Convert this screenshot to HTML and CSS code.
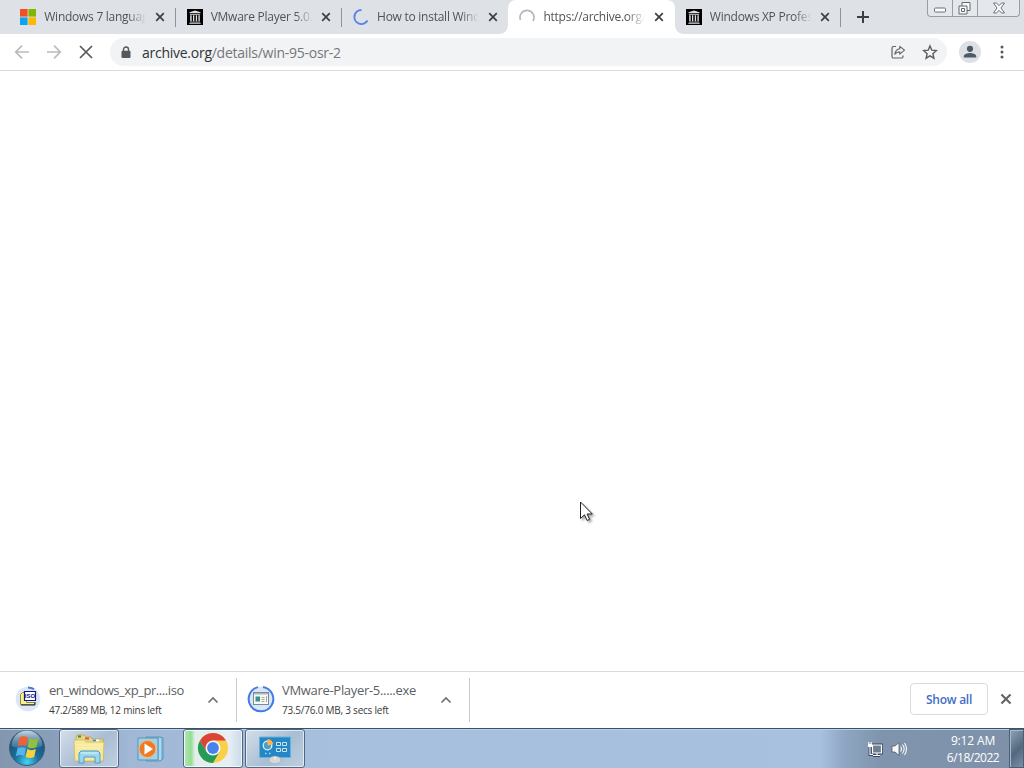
FILE: index.html
```
<!DOCTYPE html>
<html lang="en">
<head>
    <meta charset="UTF-8">
    <meta name="viewport" content="width=device-width, initial-scale=1.0">
    <title>archive.org/details/win-95-osr-2</title>
    <link rel="stylesheet" href="styles.css">
</head>
<body>
    <!-- shared shapes -->
    <svg class="defs" width="0" height="0">
        <symbol id="close" viewBox="0 0 10 10"><path d="M1.200 1.200l7.600 7.600M8.800 1.200L1.200 8.800" fill="none" stroke="currentColor" stroke-width="1.700"/></symbol>
        <symbol id="archive" viewBox="0 0 16 16">
            <path fill="#000" d="M0 0h16v16H0z"/>
            <path fill="#ddd" d="M8 1.500l5.500 1.700v.9h-11v-.9zM2.800 4.800h10.400v1H2.800zM3.200 6.300h1.500v6H3.200zM6 6.300h1.300v6H6zM8.800 6.300h1.300v6H8.800zM11.400 6.300h1.400v6h-1.400zM2.800 12.700h10.400v.8H2.800zM2.300 14h11.400v.8H2.300z"/>
        </symbol>
        <symbol id="chevron" viewBox="0 0 12 8"><path d="M1.500 6.500L6 2l4.500 4.500" fill="none" stroke="#6b6e72" stroke-width="1.600"/></symbol>
    </svg>

    <div class="tab-strip">
        <div class="tab">
            <svg class="favicon" viewBox="0 0 16 16"><path fill="#f05022" d="M0 0h7.600v7.600H0z"/><path fill="#7db900" d="M8.400 0H16v7.600H8.400z"/><path fill="#0ba4ef" d="M0 8.400h7.600V16H0z"/><path fill="#fdb801" d="M8.400 8.400H16V16H8.400z"/></svg>
            <span class="tab-title">Windows 7 languag</span>
            <svg class="tab-close"><use href="#close"/></svg>
        </div>
        <div class="tab">
            <svg class="favicon"><use href="#archive"/></svg>
            <span class="tab-title">VMware Player 5.0.</span>
            <svg class="tab-close"><use href="#close"/></svg>
        </div>
        <div class="tab no-line">
            <svg class="favicon" viewBox="0 0 16 16"><path d="M8.500 1A7 7 0 1 0 14.500 11.500" fill="none" stroke="#5b83e6" stroke-width="2"/></svg>
            <span class="tab-title">How to install Wind</span>
            <svg class="tab-close"><use href="#close"/></svg>
        </div>
        <div class="tab active no-line">
            <svg class="favicon" viewBox="0 0 16 16"><path d="M1.500 11A7 7 0 1 1 14 12" fill="none" stroke="#b2b6c3" stroke-width="1.600"/></svg>
            <span class="tab-title">https://archive.org/</span>
            <svg class="tab-close"><use href="#close"/></svg>
        </div>
        <div class="tab">
            <svg class="favicon"><use href="#archive"/></svg>
            <span class="tab-title">Windows XP Profes</span>
            <svg class="tab-close"><use href="#close"/></svg>
        </div>
        <svg class="new-tab" viewBox="0 0 12 12"><path d="M6 0v12M0 6h12" stroke="#3c4043" stroke-width="2"/></svg>
        <div class="window-buttons">
            <span class="min"><svg width="14" height="8" viewBox="0 0 14 8"><rect x="1.500" y="2" width="11" height="4" rx="1" fill="#fff" stroke="#6d7176"/></svg></span>
            <span class="max"><svg width="15" height="15" viewBox="0 0 15 15"><path d="M5 1.500h8v8h-3v3.500H2V5h3z" fill="#f8f9fa" stroke="#65696e"/><path d="M5 5h5v4.500M4.500 7.500h3v3h-3z" fill="none" stroke="#65696e"/></svg></span>
            <span class="exit"><svg width="14" height="12" viewBox="0 0 14 12"><path d="M1.500 1h3L7 3.700 9.500 1h3L9 6l3.500 5h-3L7 8.300 4.500 11h-3L5 6z" fill="#f8f9fa" stroke="#707479"/></svg></span>
        </div>
    </div>

    <div class="toolbar">
        <svg class="nav-icon" viewBox="0 0 16 16"><path d="M15 8H2M8 1.700L1.700 8 8 14.300" fill="none" stroke="#b9bbbe" stroke-width="1.700"/></svg>
        <svg class="nav-icon" viewBox="0 0 16 16"><path d="M1 8h13M8 1.700L14.300 8 8 14.300" fill="none" stroke="#b9bbbe" stroke-width="1.700"/></svg>
        <svg class="nav-icon" viewBox="0 0 16 16"><path d="M2 2l12 12M14 2L2 14" fill="none" stroke="#55585c" stroke-width="1.700"/></svg>
        <div class="address">
            <svg class="lock" viewBox="0 0 10 13"><path d="M2.500 6V3.500a2.500 2.500 0 0 1 5 0V6" fill="none" stroke="#55585c" stroke-width="1.400"/><rect x=".5" y="4.800" width="9" height="7.200" rx="1" fill="#55585c"/></svg>
            <span class="address-text"><b>archive.org</b>/details/win-95-osr-2</span>
            <svg class="share" viewBox="0 0 16 16"><path d="M6 2.500H3.500a1.500 1.500 0 0 0-1.500 1.500v8.500A1.500 1.500 0 0 0 3.500 14h8a1.500 1.500 0 0 0 1.500-1.500V11.500" fill="none" stroke="#606469" stroke-width="1.200"/><path d="M9.800 2.300L14.500 6.200l-4.700 3.900V7.900c-2.300 0-3.700.6-5 2.300.5-3 2-5.100 5-5.500z" fill="none" stroke="#606469" stroke-width="1.100" stroke-linejoin="round"/></svg>
            <svg class="star" viewBox="0 0 16 16"><path d="M8 1.900l1.800 4.300 4.600.4-3.500 3.100 1 4.500L8 11.800l-3.900 2.400 1-4.500-3.500-3.100 4.600-.4z" fill="none" stroke="#5a5e63" stroke-width="1.400"/></svg>
        </div>
        <svg class="avatar" viewBox="0 0 22 22"><circle cx="11" cy="11" r="11" fill="#dde0e5"/><circle cx="11" cy="7.800" r="3.100" fill="#4d5a66"/><path d="M4.800 16.500v-1.300c0-2.200 4-3.200 6.200-3.200s6.200 1 6.200 3.200v1.300z" fill="#4d5a66"/></svg>
        <svg class="menu" viewBox="0 0 4 14"><g fill="#55585c"><circle cx="2" cy="2" r="1.500"/><circle cx="2" cy="7" r="1.500"/><circle cx="2" cy="12" r="1.500"/></g></svg>
    </div>

    <div class="page">
        <svg class="cursor" width="18" height="24" viewBox="0 0 18 24"><path d="M1.500 1v16.500l4-3.700 2.600 5.700 2.500-1.200-2.500-5.300h5.200z" fill="#fff" stroke="#222" stroke-width="1"/></svg>
    </div>

    <div class="downloads">
        <div class="download">
            <svg class="file-icon" viewBox="0 0 28 28">
                <circle cx="14" cy="14" r="12.300" fill="#dde6f7"/>
                <path d="M14 2.500a12 12 0 0 1 6 1.700" fill="none" stroke="#4b7bd4" stroke-width="2"/>
                <path d="M6.500 9.500l2-2h4v10h8v2h-14z" fill="#f5f28c" stroke="#8f8d4a" stroke-width="1"/>
                <path d="M7 20h14v-3" fill="none" stroke="#222"/>
                <path d="M10.500 6.500h11v9h-11z" fill="#fff" stroke="#15158c" stroke-width="1.200"/>
                <text x="16" y="13.300" class="iso" text-anchor="middle">ISO</text>
            </svg>
            <div class="info">
                <div class="name name-iso">en_windows_xp_pr....iso</div>
                <div class="status">47.2/589 MB, 12 mins left</div>
            </div>
            <svg class="chevron"><use href="#chevron"/></svg>
        </div>
        <div class="download second">
            <svg class="file-icon" viewBox="0 0 28 28">
                <circle cx="14" cy="14" r="12.300" fill="#d9e5fb"/>
                <path d="M16 1.900A12.300 12.300 0 1 1 11 2.100" fill="none" stroke="#437ce0" stroke-width="2"/>
                <rect x="6.500" y="7.500" width="15" height="12" fill="#f8f8f4" stroke="#7d8c8e"/>
                <path d="M7 8h14v1.500H7z" fill="#a9b8bb"/><path d="M8.500 11.500h4.500v5H8.500z" fill="#399289"/>
                <path d="M14.500 12.500h3M14.500 14.500h3M14.500 16.500h3M19.500 11v6" stroke="#aaa99e"/>
            </svg>
            <div class="info">
                <div class="name">VMware-Player-5.....exe</div>
                <div class="status">73.5/76.0 MB, 3 secs left</div>
            </div>
            <svg class="chevron"><use href="#chevron"/></svg>
        </div>
        <button class="show-all">Show all</button>
        <svg class="shelf-close"><use href="#close"/></svg>
    </div>

    <div class="taskbar">
        <svg class="start" viewBox="0 0 38 38">
            <defs>
                <radialGradient id="orb" cx=".5" cy=".9" r=".85"><stop offset="0" stop-color="#43d5f5"/><stop offset=".4" stop-color="#1a6f9f"/><stop offset="1" stop-color="#1b4869"/></radialGradient>
                <linearGradient id="shine" x2="0" y2="1"><stop offset="0" stop-color="#dce8ef" stop-opacity=".9"/><stop offset="1" stop-color="#8fb6cd" stop-opacity=".2"/></linearGradient>
            </defs>
            <circle cx="19" cy="19" r="17.500" fill="url(#orb)" stroke="#3b5c76"/>
            <path d="M3.500 17a15.500 15.500 0 0 1 31 0c-9 4-22 4-31 0z" fill="url(#shine)"/>
            <path d="M11.500 8.500q4-2.500 8.500 0l-1.700 8.700q-4.300-2.300-8.500.3z" fill="#ed6335"/>
            <path d="M21.300 9.500q4 2.300 9-.2l-1.900 8.600q-4.700 2.600-8.800.1z" fill="#8fc23f"/>
            <path d="M9.500 19.300q4-2.300 8.500 0L16.300 27q-4.200-2.300-8.500.2z" fill="#57b4ea"/>
            <path d="M19.300 20q4.300 2.300 8.600 0l-1.700 8q-4.300 2.300-8.600-.2z" fill="#fbd13b"/>
        </svg>
        <div class="task explorer">
            <svg width="34" height="32" viewBox="0 0 34 32">
                <path d="M4 4l1-2h7l2 2h5l1 2h11v22H4z" fill="#e9d67c" stroke="#b9a04b" stroke-width=".7"/>
                <path d="M6 2.500h3v2H6z" fill="#3f8a43"/><path d="M13 4.500h4v2h-4z" fill="#cf5e3e"/><path d="M21 6.500h6v2h-6z" fill="#fff"/><path d="M21 6.500h3v2h-3z" fill="#4e87c8"/>
                <path d="M2 8l1-1h9l2 2h17l1 1-1 18H3z" fill="#f6e99b" stroke="#cfb75f" stroke-width=".7"/>
                <path d="M4 12h26M4 15h26" stroke="#fdf4bd"/>
                <path d="M7 30V20l2-2h17l2 2v10h-5v-6H12v6z" fill="#9bd6ef" stroke="#4c9ec9"/>
                <path d="M9 20h17" stroke="#dcf6ff"/>
            </svg>
        </div>
        <div class="task media">
            <svg width="30" height="30" viewBox="0 0 30 30">
                <path d="M10 3h14l3 1v21l-3 2H10z" fill="#80bddf" stroke="#4f8dae" stroke-width=".8"/><path d="M24 4v22" stroke="#daf4ff"/>
                <path d="M2 4h20v22H2z" fill="#a3d0e7" stroke="#5795b7"/>
                <circle cx="11.500" cy="15" r="8.500" fill="#eb7b26" stroke="#f8ba83"/>
                <path d="M8.500 9.500L17 15l-8.500 5.500z" fill="#fff"/>
            </svg>
        </div>
        <div class="task chrome">
            <svg width="32" height="32" viewBox="0 0 32 32">
                <circle cx="16" cy="16" r="15" fill="#fbd049"/>
                <path d="M9.500 19.750L3 8.500A15 15 0 0 0 16 31l6.500-11.250z" fill="#249b57"/>
                <path d="M16 8.500h13A15 15 0 0 0 3 8.500l6.500 11.250z" fill="#da4538"/>
                <circle cx="16" cy="16" r="7.500" fill="#f8f8f8"/><circle cx="16" cy="16" r="5.900" fill="#4783ec"/>
            </svg>
        </div>
        <div class="task control">
            <svg width="34" height="30" viewBox="0 0 34 30">
                <path d="M1.500 3h31v20.500h-31z" fill="#2587c6" stroke="#62b4dc"/>
                <circle cx="9.500" cy="11.500" r="4.300" fill="#4a9dd0" stroke="#d8f2fb" stroke-width="1.300"/>
                <path d="M10 11V5.500a5.500 5.500 0 0 1 4.800 4.300z" fill="#ffb449" stroke="#ffb449"/>
                <path d="M18.500 8.500h4v3h-4zM24.500 8.500h4v3h-4zM18.500 14.500h4v3h-4zM24.500 14.500h4v3h-4z" fill="#2779ae" stroke="#c4e9f7"/>
                <path d="M7 19.500h1.500M11 19.500h1.500" stroke="#a9d7ec" stroke-width="1.500"/>
                <ellipse cx="17" cy="26" rx="6" ry="3.800" fill="#d5d9d9" stroke="#a1adb3" stroke-width=".7"/><path d="M17 22.500v3" stroke="#fff"/>
            </svg>
        </div>
        <div class="tray">
            <svg width="16" height="16" viewBox="0 0 16 16"><path d="M5.500 4h9v8h-9zM6 14.500h7M10 12v2.500M3 6v7.500h3" fill="none" stroke="#33475a" stroke-width="2.800"/><path d="M5.500 4h9v8h-9z" fill="#6e8090" stroke="#fff" stroke-width="1.200"/><path d="M6 14.500h7M10 12v2.500M3 6v7.500h3M1.800 1v2.500M4.200 1v2.500" fill="none" stroke="#fff" stroke-width="1.100"/><path d="M1 3h4v3H1z" fill="#fff"/></svg>
            <svg width="16" height="16" viewBox="0 0 16 16"><path d="M1 5h3l4-3.500v13L4 11H1z" fill="#f8f8f8" stroke="#4a5b6b" stroke-width=".8"/><path d="M9.500 5.500q2 2.500 0 5M11.500 3.500q3.300 4.500 0 9M13.500 2q4 6 0 12" fill="none" stroke="#f4f7f9" stroke-width="1.100"/></svg>
        </div>
        <div class="clock">
            <div>9:12 AM</div>
            <div class="date">6/18/2022</div>
        </div>
        <div class="show-desktop"></div>
    </div>
</body>
</html>
```
FILE: styles.css
```
* {
    box-sizing: border-box;
}
body {
    margin: 0;
    width: 1024px;
    height: 768px;
    overflow: hidden;
    display: flex;
    flex-direction: column;
    background: #fff;
    font-family: "Open Sans", "Noto Sans", sans-serif;
    font-size: 12px;
    color: #505458;
}
svg {
    display: block;
    flex: none;
}
.defs {
    position: absolute;
}

/* tabs */
.tab-strip {
    height: 34px;
    flex: none;
    display: flex;
    padding-left: 9px;
    background: #dee1e6;
}
.tab {
    position: relative;
    width: 166.4px;
    height: 34px;
    flex: none;
    display: flex;
    align-items: center;
    padding: 0 10px 0 11.3px;
}
.tab::after {
    content: "";
    position: absolute;
    right: -0.2px;
    top: 8px;
    width: 1px;
    height: 19px;
    background: #8f9297;
}
.tab.no-line::after {
    display: none;
}
.tab.active {
    background: #fff;
    border-radius: 8px 8px 0 0;
}
.tab.active::before {
    content: "";
    position: absolute;
    left: -8px;
    right: -8px;
    bottom: 0;
    height: 8px;
    background: radial-gradient(circle at 0 0, transparent 7.5px, #fff 8px) left / 8px 8px no-repeat,
        radial-gradient(circle at 100% 0, transparent 7.5px, #fff 8px) right / 8px 8px no-repeat;
}
.favicon {
    width: 16px;
    height: 16px;
}
.tab-title {
    width: 102px;
    margin: 0 8.5px 0 8px;
    white-space: nowrap;
    line-height: 20px;
    letter-spacing: -0.26px;
    -webkit-mask-image: linear-gradient(to right, #000 84px, transparent 102px);
    mask-image: linear-gradient(to right, #000 84px, transparent 102px);
}
.tab-close {
    width: 10px;
    height: 10px;
    color: #3c4043;
}
.new-tab {
    width: 12px;
    height: 12px;
    margin: 11px 0 0 16px;
}
.window-buttons {
    display: flex;
    height: 17px;
    margin-left: auto;
    margin-right: 4px;
    border: 1px solid #9a9da3;
    border-top: 0;
    border-radius: 0 0 4px 4px;
    background: #e4e7eb;
}
.window-buttons span {
    display: flex;
    align-items: center;
    justify-content: center;
    width: 25px;
}
.window-buttons .min {
    padding-top: 3px;
    width: 24px;
}
.window-buttons .max {
    padding-right: 1px;
}
.window-buttons .exit {
    width: 42px;
}
.window-buttons span + span {
    border-left: 1px solid #9a9da3;
}

/* toolbar */
.toolbar {
    height: 37px;
    flex: none;
    display: flex;
    align-items: center;
    padding: 0 20px 0 14px;
    border-bottom: 1px solid #d9dbde;
}
.nav-icon {
    width: 16px;
    height: 16px;
    margin-right: 16px;
}
.address {
    width: 837px;
    height: 28px;
    display: flex;
    align-items: center;
    border-radius: 14px;
    background: #f1f3f4;
    padding: 0 9px 0 11px;
    font-size: 14px;
    letter-spacing: -0.26px;
    color: #74777b;
}
.lock {
    width: 10px;
    height: 13px;
    margin-right: 11px;
}
.address b {
    font-weight: normal;
    color: #303336;
}
.share {
    width: 16px;
    height: 16px;
    margin-left: auto;
    margin-right: 16px;
}
.star {
    width: 16px;
    height: 16px;
}
.avatar {
    width: 22px;
    height: 22px;
    margin-left: 12px;
}
.menu {
    width: 4px;
    height: 14px;
    margin-left: auto;
}

.page {
    flex: 1;
    position: relative;
}
.cursor {
    position: absolute;
    left: 579px;
    top: 430px;
    filter: drop-shadow(2px 2px 1px rgba(0, 0, 0, 0.35));
}

/* download shelf */
.downloads {
    height: 57px;
    flex: none;
    display: flex;
    align-items: center;
    border-top: 1px solid #d9dbde;
}
.download {
    width: 237px;
    height: 44px;
    display: flex;
    align-items: center;
    padding: 0 17px 0 14px;
    border-right: 1px solid #c8cacd;
}
.download.second {
    width: 233px;
    padding-left: 10px;
}
.file-icon {
    width: 28px;
    height: 28px;
    margin-bottom: 2px;
}
.iso {
    font: bold 6px "Liberation Sans", sans-serif;
    fill: #111180;
}
.info {
    margin-left: 7px;
    white-space: nowrap;
}
.name {
    font-size: 13px;
    line-height: 20px;
    letter-spacing: -0.31px;
    color: #5c5f63;
}
.name-iso {
    letter-spacing: -0.43px;
}
.status {
    font-size: 10px;
    line-height: 20px;
    letter-spacing: -0.23px;
    color: #3a3a3a;
}
.chevron {
    width: 12px;
    height: 8px;
    margin-left: auto;
}
.show-all {
    width: 78px;
    height: 32px;
    margin-left: auto;
    margin-bottom: 2px;
    padding: 0;
    border: 1px solid #d9dbde;
    border-radius: 4px;
    background: #fff;
    color: #3f6fc4;
    font: 600 12px "Open Sans", sans-serif;
    letter-spacing: -0.25px;
}
.shelf-close {
    width: 12px;
    height: 12px;
    margin: 0 12px 2px 12px;
    color: #5f6368;
}

/* taskbar */
.taskbar {
    height: 40px;
    flex: none;
    display: flex;
    border-top: 1px solid #35536f;
    box-shadow: inset 0 1px #bfd2e5;
    background: linear-gradient(to right, #8396ae 0, #8a9fba 55px, #a0b8d6 130px, #a6bfdd 310px, #a8c1df 820px, #8ea6c2 845px, #8094ad 880px, #7e91a9 1024px);
}
.start {
    width: 38px;
    height: 38px;
    margin: 0 13px 0 8px;
}
.task {
    width: 60px;
    height: 39px;
    display: flex;
    align-items: center;
    justify-content: center;
    border: 1px solid #52677f;
    border-radius: 3px;
    box-shadow: inset 0 0 0 1px rgba(255, 255, 255, 0.6);
    background: linear-gradient(135deg, #d3deea, #a9bdd3 55%, #bfcfe1);
    margin-right: 2px;
}
.task.media {
    border-color: transparent;
    box-shadow: none;
    background: none;
}
.task.chrome {
    padding-bottom: 2px;
    background: linear-gradient(to right, #b5e6b8 0, #8fdf90 7px, #e3eee9 11px, #e8eef4 45px, #cbd9e9);
    box-shadow: inset 0 0 0 1px #f3f8fc;
}
.tray {
    display: flex;
    gap: 8px;
    margin-left: auto;
    margin-top: 12px;
}
.clock {
    width: 72px;
    margin-left: 30px;
    padding-top: 3px;
    text-align: center;
    line-height: 17px;
    letter-spacing: -0.15px;
    color: #fff;
}
.date {
    letter-spacing: -0.5px;
}
.show-desktop {
    width: 15px;
    border: 1px solid #4b5f75;
    box-shadow: inset 1px 1px #a9b9c9;
    background: linear-gradient(135deg, #91a3b7, #53687f 55%, #7b90a8);
}
```
